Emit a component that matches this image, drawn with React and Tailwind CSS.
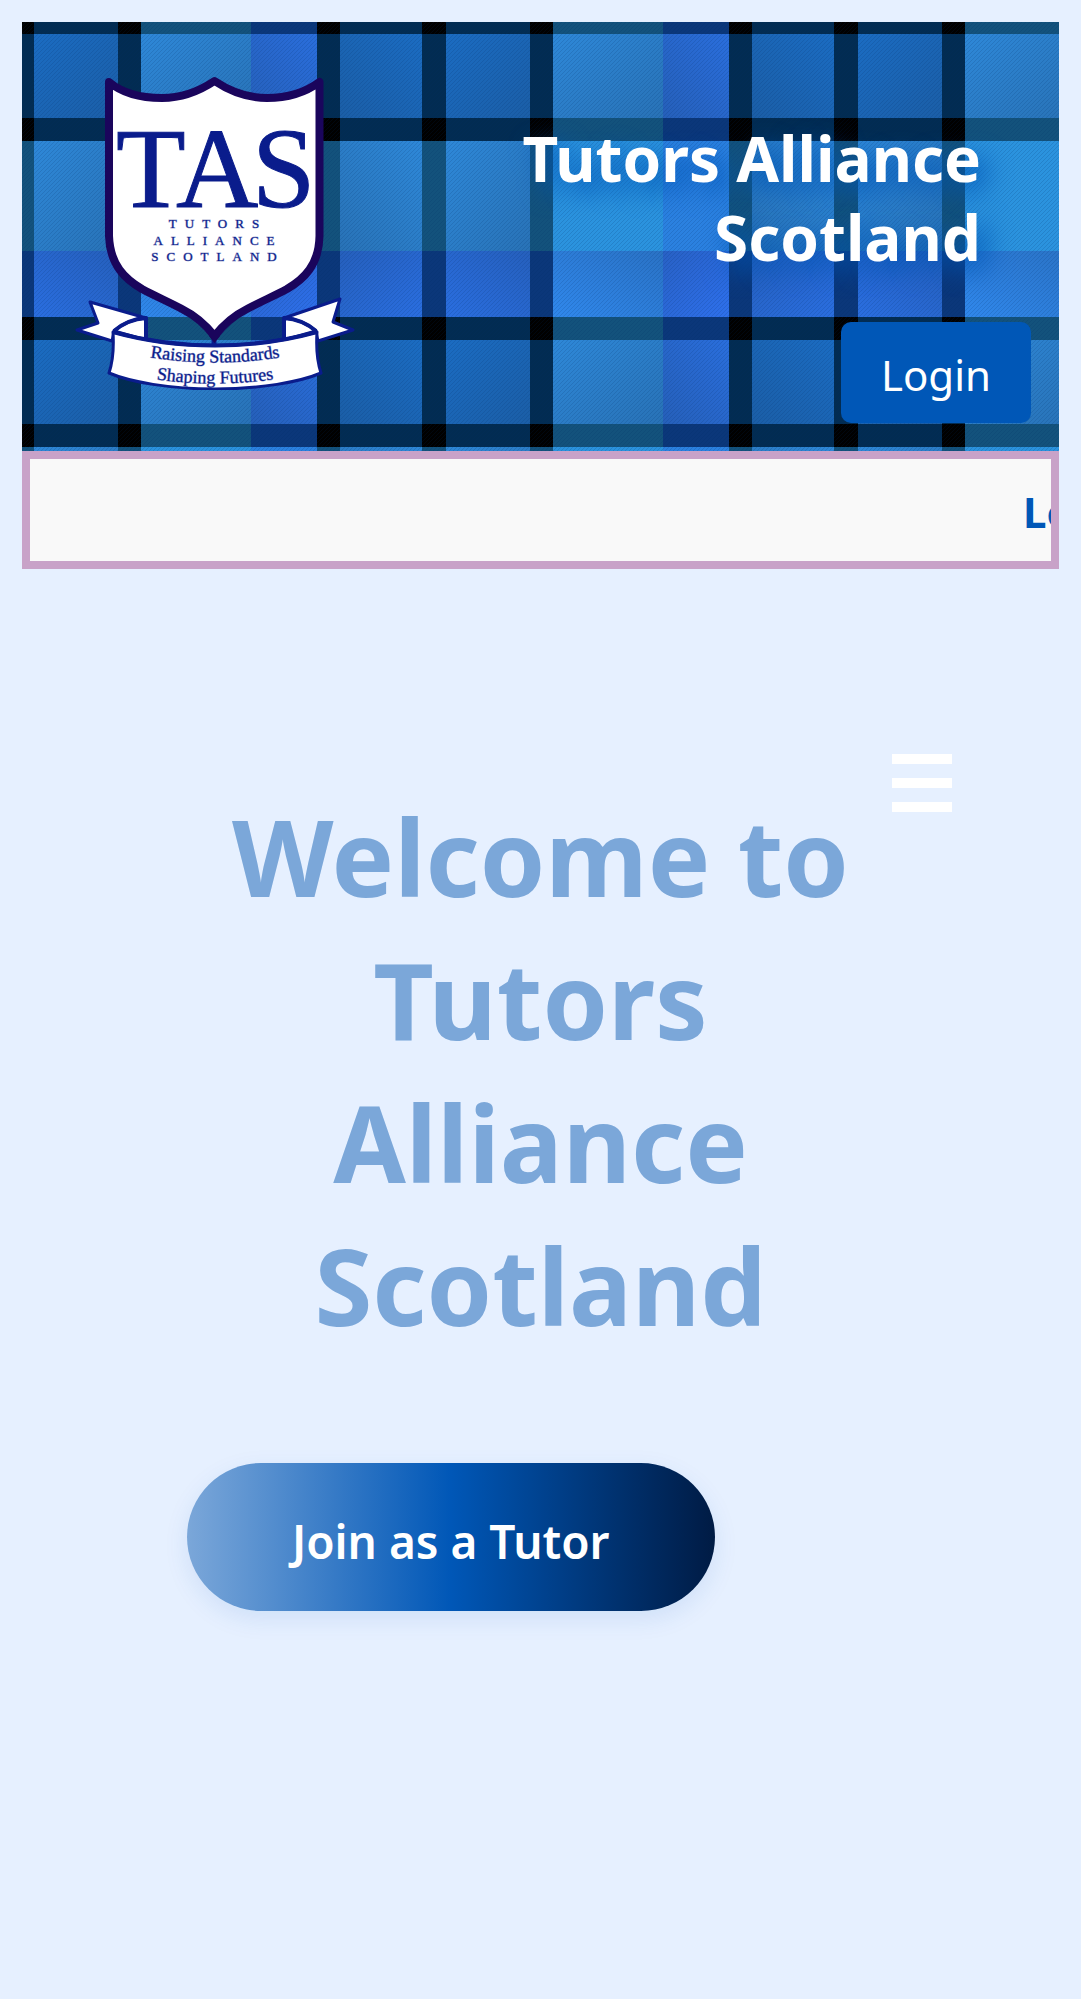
import React from 'react';

const COLS = [
  { tone: 'D', size: 23 },
  { tone: 'L', size: 110, lit: 'l' },
  { tone: 'V', size: 66, lit: 'r' },
  { tone: 'D', size: 23 },
  { tone: 'B', size: 82, lit: 'r' },
  { tone: 'D', size: 24 },
  { tone: 'B', size: 84, lit: 'l' },
];
const ROWS = [
  { tone: 'D', size: 23 },
  { tone: 'L', size: 110, lit: 't' },
  { tone: 'V', size: 66, lit: 'b' },
  { tone: 'D', size: 23 },
  { tone: 'B', size: 84, lit: 't' },
];

const WEAVE = {
  DD: '#000000', DB: '#022c52', DL: '#13527c', DV: '#0b377a',
  BD: '#022c52', BB: '#1b6cc2', BL: '#2e88d8', BV: '#2a6edc',
  LD: '#13527c', LB: '#2e88d8', LL: '#2b93de', LV: '#2b81e0',
  VD: '#0b377a', VB: '#2a6ee0', VL: '#3088ec', VV: '#2e70ec',
};

function weaveCells() {
  const cells = [];
  let y = 0;
  ROWS.forEach((row) => {
    let x = 0;
    COLS.forEach((col) => {
      const even = row.tone === 'L' && col.tone !== 'B';
      cells.push({
        x, y, w: col.size, h: row.size,
        fill: WEAVE[row.tone + col.tone],
        shade: row.lit && col.lit && !even ? 'shade-' + row.lit + col.lit : null,
      });
      x += col.size;
    });
    y += row.size;
  });
  return cells;
}

function Shade({ id, x1, y1, x2, y2 }) {
  return (
    <linearGradient id={id} x1={x1} y1={y1} x2={x2} y2={y2}>
      <stop offset="0" stopColor="#1a3a60" stopOpacity="0" />
      <stop offset="1" stopColor="#1a3a60" stopOpacity="0.28" />
    </linearGradient>
  );
}

function Tartan() {
  return (
    <svg className="absolute inset-0 h-full w-full" aria-hidden="true">
      <defs>
        <Shade id="shade-tl" x1="0" y1="0" x2="1" y2="1" />
        <Shade id="shade-tr" x1="1" y1="0" x2="0" y2="1" />
        <Shade id="shade-bl" x1="0" y1="1" x2="1" y2="0" />
        <Shade id="shade-br" x1="1" y1="1" x2="0" y2="0" />
        <pattern id="twill" width="4" height="4" patternUnits="userSpaceOnUse">
          <path d="M-1 1L1 -1M0 4L4 0M3 5L5 3" stroke="#002a66" strokeOpacity="0.16" strokeWidth="1" />
        </pattern>
        <pattern id="tartan" x="96" y="96" width="412" height="306" patternUnits="userSpaceOnUse">
          {weaveCells().map((c) => (
            <g key={c.x + '-' + c.y} shapeRendering="crispEdges">
              <rect x={c.x} y={c.y} width={c.w} height={c.h} fill={c.fill} />
              {c.shade && <rect x={c.x} y={c.y} width={c.w} height={c.h} fill={'url(#' + c.shade + ')'} />}
            </g>
          ))}
        </pattern>
      </defs>
      <rect width="100%" height="100%" fill="url(#tartan)" />
      <rect width="100%" height="100%" fill="url(#twill)" />
    </svg>
  );
}

function Crest() {
  return (
    <svg viewBox="0 0 290 340" className="relative w-[290px] shrink-0" role="img" aria-label="Tutors Alliance Scotland crest">
      <defs>
        <path id="motto-top" d="M43 290Q145 315 247 290" />
        <path id="motto-bottom" d="M43 311Q145 336 247 311" />
        <clipPath id="crest-edge"><rect width="290" height="330" /></clipPath>
      </defs>
      <path d="M144 274V288" stroke="#0a1c8c" strokeWidth="5" />
      <path
        d="M39 22C52 33 70 38 92 38C113 38 131 30 144.500 21C158 30 176 38 197 38C218 38 236 32 249.500 22V176C249 205 234 219 217 229C204 236 190 242 177 249C163 256 153 265 144.500 276C136 265 126 256 112 249C99 242 85 236 72 229C55 219 40 205 39 176Z"
        fill="#fff" stroke="#1a055c" strokeWidth="8" strokeLinejoin="round"
      />
      <path d="M139 276L144.500 283L150 276Z" fill="#1a055c" />
      <g fill="#fff" stroke="#0a1c8c" strokeWidth="3" strokeLinejoin="round" clipPath="url(#crest-edge)">
        <path d="M20 242L76 258L44 272L42 281L7 270L28 263Z" />
        <path d="M270 239L214 258L246 272L248 281L283 270L263 262Z" />
        <path d="M44 271C52 264 62 259 76 258V280Z" />
        <path d="M246 271C238 264 228 259 214 258V280Z" />
        <path d="M43 272C108 290 182 290 247 272C246 288 247 301 251 313C230 322 190 329 145 329C100 329 60 322 39 313C43 301 44 288 43 272Z" />
      </g>
      <path d="M43 272C108 290 182 290 247 272" fill="none" stroke="#0a1c8c" strokeWidth="4" />
      <path d="M44 271C52 264 62 259 76 258V279M246 271C238 264 228 259 214 258V279" fill="none" stroke="#0a1c8c" strokeWidth="4" strokeLinejoin="round" />
      <g fill="#0a1c8c" fontFamily="'Liberation Serif', serif">
        <text x="46 106 182" y="147" fontSize="114" stroke="#0a1c8c" strokeWidth="1">TAS</text>
        <g fontSize="13" textAnchor="middle" className="tracking-[8px]" stroke="#0a1c8c" strokeOpacity="0.4" strokeWidth="1">
          <text x="148" y="168">TUTORS</text>
          <text x="148" y="185">ALLIANCE</text>
          <text x="148" y="201">SCOTLAND</text>
        </g>
        <g fontSize="18" textAnchor="middle" stroke="#0a1c8c" strokeOpacity="0.4" strokeWidth="1">
          <text><textPath href="#motto-top" startOffset="50%">Raising Standards</textPath></text>
          <text><textPath href="#motto-bottom" startOffset="50%">Shaping Futures</textPath></text>
        </g>
      </g>
    </svg>
  );
}

export default function App() {
  return (
    <div className="min-h-screen bg-[#e6f0ff] p-[22px] font-['Noto_Sans','Open_Sans',sans-serif]">
      <header className="relative flex justify-between pt-[38px] pr-7 pb-[51px] pl-12">
        <Tartan />
        <Crest />
        <div className="relative flex flex-col items-end pt-[59px]">
          <p className="pr-[50px] text-right text-[62px] leading-[79px] font-bold text-white [text-shadow:10px_10px_24px_#0057b7]">
            Tutors Alliance<br />Scotland
          </p>
          <a href="#login" className="-mb-6 mt-[45px] flex h-[101px] items-center rounded-[10px] bg-[#0057b7] px-10 pt-1 text-[42px] text-white">
            Login
          </a>
        </div>
      </header>

      <div className="flex h-[118px] items-center justify-end overflow-hidden border-8 border-[#c8a2c8] bg-[#f9f9f9]">
        <p className="w-7 whitespace-nowrap pt-[2px] text-[42px] font-bold text-[#0057b7]">Lo</p>
      </div>

      <main className="relative pt-[216px]">
        <button type="button" aria-label="Menu" className="absolute top-[185px] right-[107px] flex w-[60px] flex-col gap-[14px]">
          <span className="h-[10px] w-full bg-white" />
          <span className="h-[10px] w-full bg-white" />
          <span className="h-[10px] w-full bg-white" />
        </button>
        <section className="mx-auto max-w-[707px]">
          <h1 className="text-center text-[105px] leading-[143px] font-bold text-[#7ba7d9]">
            Welcome to Tutors Alliance Scotland
          </h1>
          <a
            href="#join"
            className="mt-[106px] inline-flex h-[148px] items-center rounded-full bg-[linear-gradient(90deg,#7ba7d9,#0057b7_50%,#001b44)] px-[105px] pt-2 text-[46px] font-semibold whitespace-nowrap text-white shadow-[0_8px_24px_rgba(0,87,183,0.1)]"
          >
            Join as a Tutor
          </a>
        </section>
      </main>
    </div>
  );
}
